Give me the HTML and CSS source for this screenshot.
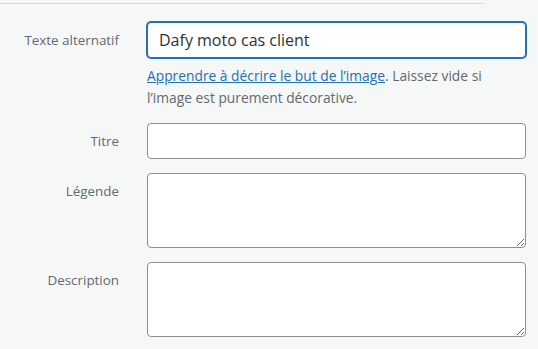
FILE: index.html
```html
<!DOCTYPE html>
<html lang="fr">
<head>
    <meta charset="UTF-8">
    <meta name="viewport" content="width=device-width, initial-scale=1.0">
    <title>Détails du fichier attaché</title>
    <link rel="stylesheet" href="styles.css">
</head>
<body>
    <div class="section-top"></div>

    <div class="settings">
        <label class="setting" for="altText">
            <span class="name">Texte alternatif</span>
            <div class="field">
                <input class="text-input is-focused" id="altText" type="text" value="Dafy moto cas client" autofocus>
                <p class="description">
                    <a href="#" class="help-link">Apprendre à décrire le but de l’image</a>. Laissez vide si l’image est purement décorative.
                </p>
            </div>
        </label>

        <label class="setting" for="title">
            <span class="name">Titre</span>
            <div class="field">
                <input class="text-input" id="title" type="text">
            </div>
        </label>

        <label class="setting" for="caption">
            <span class="name">Légende</span>
            <div class="field">
                <textarea class="text-area" id="caption"></textarea>
            </div>
        </label>

        <label class="setting" for="description">
            <span class="name">Description</span>
            <div class="field">
                <textarea class="text-area" id="description"></textarea>
            </div>
        </label>
    </div>
</body>
</html>
```

FILE: styles.css
```css
* {
    margin: 0;
    padding: 0;
    box-sizing: border-box;
}

body {
    font-family: 'Open Sans', 'Noto Sans', sans-serif;
    background-color: #f6f7f7;
    color: #646970;
    font-size: 13.4px;
}

.section-top {
    width: 485px;
    height: 4px;
    border-bottom: 1px solid #dcdcde;
}

.settings {
    display: flex;
    flex-direction: column;
    gap: 14px;
    padding-top: 18px;
}

.setting {
    display: grid;
    grid-template-columns: 119px 379px;
    column-gap: 28px;
    align-items: start;
}

.name {
    text-align: right;
    line-height: 36px;
    color: #646970;
}

.text-input,
.text-area {
    display: block;
    width: 100%;
    background: #ffffff;
    border: 1px solid #8c8f94;
    border-radius: 4px;
    color: #2c3338;
    font-family: inherit;
    font-size: 16px;
    padding: 0 11px;
    outline: none;
}

.text-input {
    height: 36px;
}

.text-area {
    height: 75px;
    resize: vertical;
}

.text-input.is-focused,
.text-input:focus {
    border-color: #2271b1;
    box-shadow: 0 0 0 1px #2271b1;
}

.description {
    margin-top: 7px;
    font-size: 13.8px;
    line-height: 22px;
    color: #646970;
}

.help-link {
    color: #2271b1;
    text-decoration: underline;
}
```
